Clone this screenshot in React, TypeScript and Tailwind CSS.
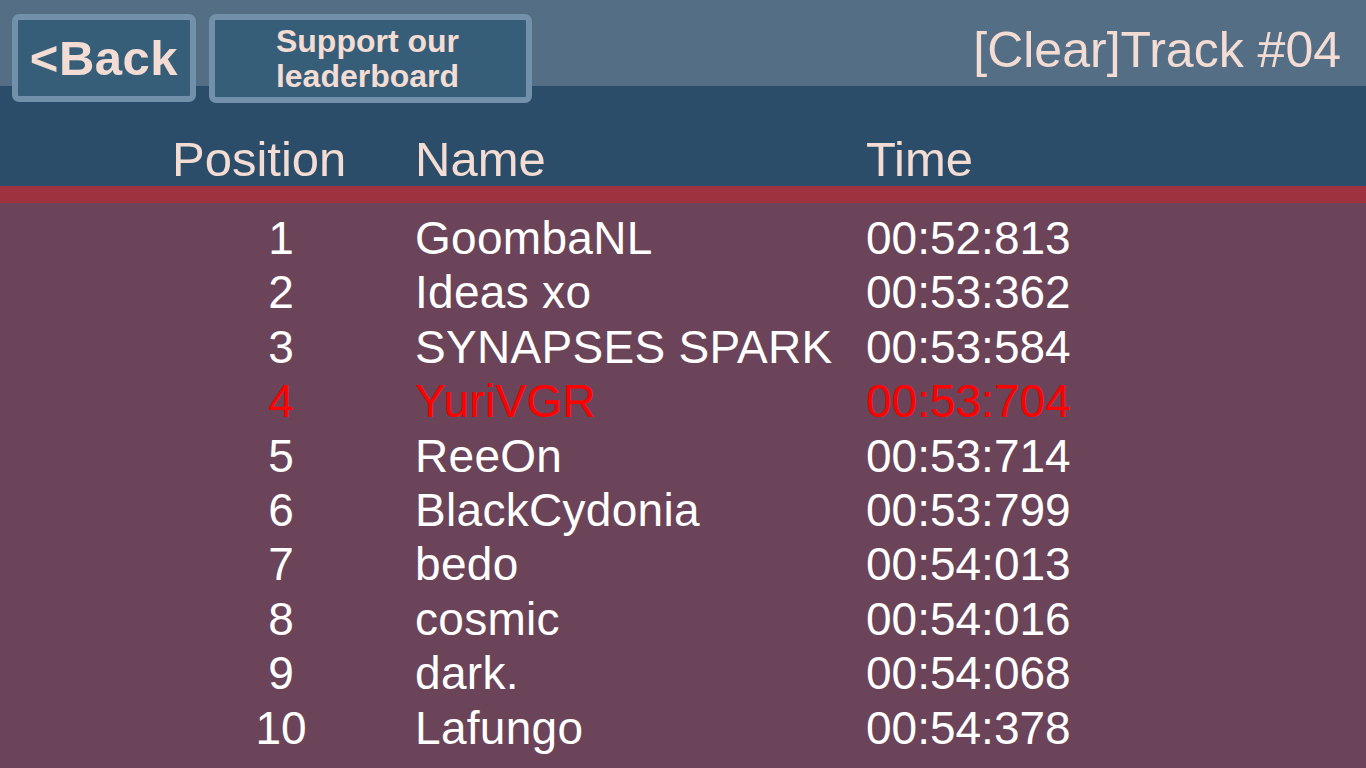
const rows = [
  { pos: 1, name: "GoombaNL", time: "00:52:813" },
  { pos: 2, name: "Ideas xo", time: "00:53:362" },
  { pos: 3, name: "SYNAPSES SPARK", time: "00:53:584" },
  { pos: 4, name: "YuriVGR", time: "00:53:704", me: true },
  { pos: 5, name: "ReeOn", time: "00:53:714" },
  { pos: 6, name: "BlackCydonia", time: "00:53:799" },
  { pos: 7, name: "bedo", time: "00:54:013" },
  { pos: 8, name: "cosmic", time: "00:54:016" },
  { pos: 9, name: "dark.", time: "00:54:068" },
  { pos: 10, name: "Lafungo", time: "00:54:378" },
];

export default function App() {
  return (
    <div className="flex h-[768px] w-[1366px] flex-col overflow-hidden bg-[#6b4459] font-['Liberation_Sans',Arial,sans-serif]">
      {/* Top bar + column header */}
      <div className="h-[186px] bg-[linear-gradient(to_bottom,#546e86_86px,#2b4d6a_86px)]">
        <div className="flex items-start justify-between">
          <div className="flex gap-[13px] pl-[12px] pt-[14px]">
            <button className="flex h-[88px] w-[184px] items-center justify-center rounded-[7px] border-[6px] border-[#7290a9] bg-[#375e79] text-[49px] font-bold leading-none tracking-[0.5px] text-[#f3dcd3]">
              &lt;Back
            </button>
            <button className="flex h-[89px] w-[323px] flex-col items-center justify-center rounded-[7px] border-[6px] border-[#7290a9] bg-[#375e79] pr-[6px] text-[32px] font-bold leading-[35px] text-[#f3dcd3]">
              <span>Support our</span>
              <span>leaderboard</span>
            </button>
          </div>
          <div className="pr-[25px] pt-[25px] text-[50px] leading-[50px] text-[#f3dcd3]">
            [Clear]Track #04
          </div>
        </div>

        {/* Column header */}
        <div className="mt-[32px] flex text-[49px] leading-[48px] text-[#f3dcd3]">
          <div className="w-[415px] pl-[172px]">Position</div>
          <div className="w-[451px]">Name</div>
          <div>Time</div>
        </div>
      </div>

      <div className="h-[17px] bg-[#9e333f]" />

      {/* Rows */}
      <div className="pt-[8px]">
        {rows.map((r) => (
          <div
            key={r.pos}
            className={`flex text-[46px] leading-[54.4px] ${r.me ? "text-[#ff0000]" : "text-white"}`}
          >
            <div className="ml-[172px] w-[218px] text-center">{r.pos}</div>
            <div className="ml-[25px] w-[451px] whitespace-nowrap tracking-[0.3px]">{r.name}</div>
            <div>{r.time}</div>
          </div>
        ))}
      </div>
    </div>
  );
}
